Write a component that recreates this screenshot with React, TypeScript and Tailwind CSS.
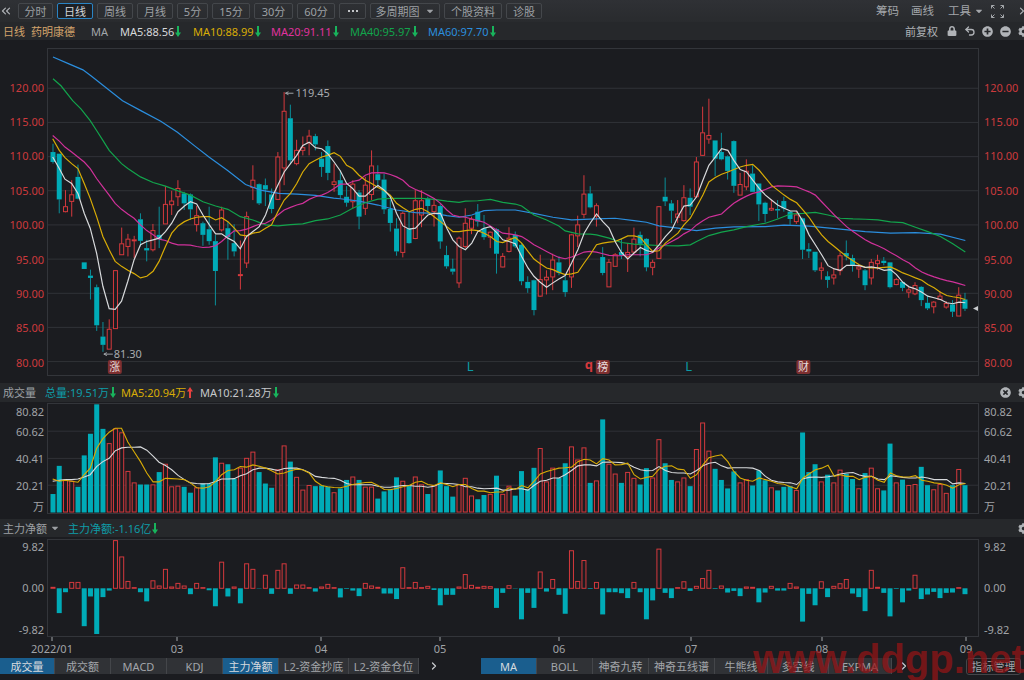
import React from "react";
import { ChevronsLeft, ChevronsRight, ChevronRight, Undo2 } from "lucide-react";
import { FaCaretDown, FaCog, FaLock, FaMinusCircle, FaPlusCircle, FaTimesCircle } from "react-icons/fa";

const UP = "#d6393d";
const DN = "#00abb7";
const BG = "#1b1c20";
const X = (i: number) => 52 + i * 6.26;

// [colour (1 red, 0 teal), high, body top, body bottom, low] measured on a 3x grid
const C: number[][] = [
  [0,130,155,185,190],[0,160,160,298,340],[1,270,320,335,337],[1,240,284,304,350],[0,193,230,296,298],
  [0,488,488,508,508],[0,510,528,535,600],[0,555,563,678,695],[0,668,712,737,758],[1,660,690,750,750],
  [1,513,513,688,688],[1,383,432,465,465],[1,402,418,440,470],[1,408,420,422,475],[0,340,358,423,440],
  [0,420,445,452,485],[1,372,392,450,455],[0,320,405,418,445],[1,258,313,372,372],[1,272,303,314,345],
  [1,240,265,290,318],[0,275,280,310,330],[0,280,283,328,360],[1,318,347,374,395],[0,365,370,405,438],
  [0,320,388,424,435],[0,405,424,514,618],[1,320,330,390,395],[0,365,385,412,480],[0,373,430,455,470],
  [1,422,525,528,570],[1,335,350,490,505],[1,195,240,262,300],[0,250,252,310,315],[0,235,255,268,318],
  [0,265,283,327,340],[1,155,170,298,300],[1,-26,32,203,255],[0,12,53,180,190],[1,118,150,190,195],
  [1,108,142,150,165],[1,88,107,127,165],[0,100,107,132,150],[0,155,175,200,230],[0,120,137,218,240],
  [1,190,245,253,275],[0,210,240,285,295],[0,258,290,308,320],[1,240,252,305,325],[0,270,277,350,388],
  [1,230,255,325,345],[1,150,197,283,300],[0,195,222,240,255],[0,220,238,328,342],[0,300,327,369,395],
  [0,355,386,455,468],[1,335,340,458,473],[0,335,385,430,432],[1,270,302,416,418],[1,270,302,345,382],
  [0,290,296,318,340],[1,295,316,335,380],[0,310,318,425,447],[0,438,466,500,507],[0,477,507,516,525],
  [1,410,415,550,565],[1,325,370,440,445],[1,350,358,385,403],[0,312,335,365,380],[0,345,385,412,420],
  [1,395,397,412,445],[0,385,388,462,522],[1,460,470,502,503],[1,382,415,455,458],[0,395,405,440,445],
  [0,430,435,545,557],[0,530,547,566,580],[0,540,542,632,648],[1,465,540,590,592],[1,512,533,541,585],
  [1,462,481,532,572],[0,470,488,520,527],[0,530,542,578,592],[1,402,405,532,565],[1,347,375,408,442],
  [1,225,282,343,355],[0,258,280,322,325],[1,310,317,348,380],[0,442,472,520,527],[1,478,488,562,562],
  [1,460,465,500,500],[0,415,457,467,478],[1,430,458,470,517],[1,383,418,457,462],[0,395,405,432,470],
  [0,415,417,503,515],[1,480,488,503,527],[1,318,320,476,476],[0,232,290,304,318],[0,300,310,332,370],
  [1,300,342,352,370],[1,255,293,362,365],[0,265,293,320,345],[1,170,185,290,292],[1,18,97,165,167],
  [1,-6,105,116,130],[0,120,120,175,228],[0,97,155,177,180],[0,165,168,212,238],[0,120,122,257,278],
  [1,218,253,285,285],[1,177,213,260,270],[0,195,220,275,275],[0,250,250,313,363],[0,305,308,342,368],
  [1,298,325,330,333],[0,300,327,331,355],[0,290,303,325,335],[0,333,335,357,375],[1,333,345,365,372],
  [0,353,355,450,478],[0,430,448,455,475],[0,456,456,512,517],[1,488,505,512,540],[0,515,530,541,565],
  [1,505,526,535,555],[1,458,468,513,527],[0,422,460,470,482],[0,465,475,497,516],[1,495,502,508,535],
  [0,508,512,557,572],[1,478,488,535,555],[1,465,483,492,510],[0,472,483,490,497],[0,488,488,563,567],
  [1,535,540,555,557],[0,545,547,565,575],[1,563,571,578,595],[1,548,558,583,587],[0,560,562,602,620],
  [0,588,610,627,632],[1,605,608,622,642],[1,575,590,600,602],[1,605,612,623,628],[0,602,615,637,653],
  [1,563,587,650,650],[0,580,600,628,635],
];

// top of each volume bar on the same 3x grid, signed: + red hollow, - teal solid
const V: number[] = [
  -344,-258,303,305,-322,-226,-160,-70,-145,190,145,157,275,310,-315,-315,316,-277,253,322,320,-322,-340,325,-312,
  -312,-232,250,-253,-298,265,235,216,-277,-312,-325,270,197,-245,293,332,318,-320,-318,-322,340,-327,-301,292,-301,
  323,323,-358,-336,-330,-293,305,-318,292,316,-344,318,-272,-320,-352,316,296,350,-360,-347,345,-288,345,320,-349,
  -274,-330,-264,205,307,265,-295,-250,200,240,203,-310,304,-116,253,283,-310,278,296,-315,-265,295,178,-250,-301,
  307,295,-320,208,127,213,-267,-301,-327,-275,310,300,-318,-272,-302,325,-333,-322,-320,333,-156,-277,-253,307,-285,
  310,271,-282,-298,328,-280,265,328,-333,-190,310,-300,318,315,-261,-317,331,315,342,-317,269,-317,
];

// net-flow bars, colour from the sign; same 3x grid
const N: number[] = [
  3,-76,-12,18,18,-116,-25,-140,-27,-7,146,96,21,2,-12,-40,23,7,58,4,15,7,-18,15,2,-6,-55,80,-25,4,-46,75,58,-1,40,
  -17,55,75,-17,10,10,2,-10,4,12,2,-28,-2,-7,-24,15,7,3,-16,-16,-33,63,2,18,2,6,-5,-52,-20,-20,4,42,9,3,6,5,-60,-14,
  8,-1,-95,-14,-60,50,-10,27,-20,-78,115,21,85,-2,18,-80,-12,-12,-15,-30,18,-12,-95,-37,120,-14,-30,2,20,-8,6,30,55,
  -2,7,-13,-8,-24,4,3,-43,-13,6,-7,-7,15,4,-102,-17,-52,20,-27,6,14,27,-16,-27,-70,55,3,-14,-86,-2,-43,-7,40,-33,-19,
  -11,-30,-14,-13,2,-18,
];

const seg = (ox: number, oy: number, a: number[]) => {
  const out: string[] = [];
  for (let i = 0; i < a.length; i += 2) out.push(`${(ox + a[i] / 3).toFixed(1)},${(oy + a[i + 1] / 3).toFixed(1)}`);
  return out.join(" ");
};
const line = (oy: number, a: number[], b: number[], c: number[]) => `${seg(0, oy, a)} ${seg(340, oy, b)} ${seg(680, oy, c)}`;

const MA5 = line(100,
  [155,170,175,205,192,237,212,250,231,280,250,340,268,385,287,460,306,560,325,628,343,630,362,605,381,545,400,480,419,435,438,425,457,420,475,415,494,395,513,370,532,335,551,318,569,305,588,312,607,345,626,375,645,402,663,402,682,415,701,425,719,447,738,410,757,395,776,380,795,345,813,295,832,255,851,215,870,190,889,165,907,135,926,125,945,142,964,145,982,160,1001,185,1020,212],
  [19,250,37,265,56,288,75,288,94,270,113,256,132,270,150,290,169,340,188,378,207,388,226,385,244,365,263,345,282,340,301,340,320,385,338,420,357,440,376,450,395,430,413,395,432,385,451,380,470,398,488,420,507,425,526,432,545,470,564,505,582,530,601,548,620,563,639,550,657,538,676,528,695,490,714,450,733,400,751,370,770,342,789,365,808,385,826,425,845,458,864,478,883,460,902,443,920,452,939,457,958,435,977,410,996,390,1015,350],
  [13,318,32,315,51,290,70,240,88,195,107,170,126,145,145,150,163,180,182,208,201,215,220,240,239,265,258,285,276,300,295,315,314,325,333,333,352,333,371,365,389,405,408,435,427,465,446,498,465,508,483,512,502,497,521,497,540,498,558,503,577,502,596,505,615,512,634,510,652,525,671,548,690,562,709,568,728,578,746,590,765,595,784,600,803,610,821,613,840,608,859,610]);
const MA10 = line(100,
  [155,115,175,150,192,172,212,190,231,205,250,250,268,295,287,350,306,410,325,450,343,485,362,500,381,512,400,522,419,535,438,530,457,515,475,485,494,440,513,400,532,378,551,365,569,357,588,352,607,350,626,350,645,360,663,353,682,365,701,385,719,405,738,408,757,400,776,397,795,385,813,375,832,335,851,300,870,280,889,250,907,215,926,190,945,180,964,170,982,165,1001,157,1020,168],
  [19,195,37,205,56,225,75,240,94,250,113,262,132,272,150,285,169,310,188,323,207,335,226,328,244,325,263,335,282,350,301,365,320,380,338,395,357,395,376,392,395,390,413,392,432,400,451,410,470,425,488,428,507,420,526,413,545,430,564,455,582,478,601,492,620,505,639,510,657,518,676,525,695,523,714,518,733,490,751,465,770,435,789,430,808,427,826,425,845,417,864,408,883,408,902,413,920,435,939,455,958,453,977,430,996,415,1015,400],
  [13,375,32,355,51,320,70,285,88,245,107,232,126,222,145,215,163,208,182,200,201,195,220,192,239,210,258,233,276,255,295,270,314,285,333,298,352,308,371,330,389,352,408,380,427,405,446,425,465,440,483,455,502,470,521,483,540,495,558,503,577,505,596,505,615,503,634,502,652,510,671,520,690,527,709,535,728,542,746,555,765,565,784,578,803,588,821,592,840,595,859,600]);
const MA20 = line(100,
  [155,105,175,122,192,140,212,155,231,170,250,185,268,205,287,235,306,260,325,285,343,310,362,328,381,342,400,355,419,375,438,392,457,405,475,418,494,422,513,430,532,435,551,435,569,436,588,440,607,443,626,442,645,438,663,425,682,408,701,393,719,392,738,388,757,380,776,373,795,370,813,360,832,345,851,330,870,322,889,315,907,310,926,298,945,290,964,285,982,277,1001,265,1020,252],
  [19,252,37,244,56,240,75,225,94,218,113,217,132,218,150,223,169,230,188,240,207,258,226,268,244,275,263,285,282,295,301,310,320,330,338,345,357,350,376,352,395,357,413,362,432,367,451,378,470,390,488,400,507,402,526,405,545,410,564,422,582,435,601,445,620,455,639,465,657,473,676,477,695,472,714,465,733,457,751,455,770,457,789,462,808,467,826,468,845,468,864,465,883,465,902,465,920,465,939,458,958,445,977,435,996,425,1015,415],
  [13,402,32,392,51,375,70,362,88,352,107,347,126,342,145,325,163,310,182,298,201,288,220,280,239,275,258,268,276,260,295,257,314,258,333,259,352,260,371,268,389,275,408,285,427,305,446,325,465,345,483,362,502,380,521,395,540,408,558,420,577,430,596,438,615,447,634,458,652,468,671,480,690,490,709,505,728,517,746,525,765,532,784,538,803,543,821,547,840,552,859,558]);
const MA40 = "52,78 60,85 " + line(100,
  [215,0,240,25,268,60,287,90,306,120,325,150,362,190,381,205,419,230,457,247,494,258,532,272,569,285,607,305,645,318,682,328,719,350,757,360,795,375,832,378,870,374,907,372,945,362,982,357,1020,345],
  [37,325,75,308,113,297,150,295,207,295,244,295,282,298,320,303,357,307,376,303,413,302,451,298,488,307,526,312,545,318,582,345,620,360,657,378,676,393,714,402,751,403,770,405,808,415,845,428,883,433,920,435,958,437,1015,438],
  [32,435,51,425,88,407,126,397,163,390,201,380,239,373,258,370,295,357,333,342,371,340,408,337,446,345,483,355,521,357,558,358,596,360,634,366,671,368,709,382,746,395,784,410,821,432,859,457]);
const MA60 = "52,56 68,63 82,69 90,75 " + line(100,
  [365,0,420,30,480,62,530,95,580,135,625,170,680,210,735,253,780,270,835,280,890,282,945,286,1000,294,1020,296],
  [56,303,113,315,169,330,226,338,282,340,320,347,357,352,395,345,432,332,470,330,526,330,582,340,639,352,695,360,770,357,826,355,883,362,920,367,958,378,1015,385],
  [51,392,107,385,163,381,258,380,314,376,389,379,483,388,558,395,634,400,709,398,784,403,859,422]);

const VOLY = line(380,
  [155,298,175,305,192,302,212,305,231,308,250,285,268,265,287,205,306,175,325,155,343,143,362,143,381,185,400,215,419,245,438,280,457,307,475,307,494,296,513,297,532,298,551,300,569,310,588,325,607,326,626,322,645,305,663,285,682,272,701,270,719,260,738,262,757,255,776,259,795,265,813,273,832,283,851,280,870,273,889,268,907,270,926,280,945,305,964,318,982,322,1001,324,1020,325],
  [19,320,37,315,56,312,75,309,94,308,113,318,132,330,150,331,169,327,188,322,207,318,226,308,244,305,263,315,282,318,301,310,320,315,338,322,357,315,376,315,395,327,413,335,432,335,451,340,470,338,488,338,507,325,526,330,545,318,564,325,582,305,601,283,620,275,639,270,657,265,676,264,695,262,714,245,733,238,751,240,770,252,789,236,808,240,826,255,845,254,864,250,883,285,902,298,920,293,939,290,958,268,977,259,996,258,1015,268],
  [13,270,32,296,51,285,70,255,88,233,107,228,126,224,145,245,163,275,182,295,201,302,220,305,239,295,258,300,276,305,295,312,314,314,333,322,352,328,371,295,389,283,408,270,427,265,446,256,465,290,483,285,502,290,521,290,540,300,558,293,577,290,596,302,615,308,634,280,652,288,671,292,690,292,709,288,728,302,746,305,765,310,784,312,803,317,821,326,840,316,859,312]);
const VOLW = line(380,
  [155,305,175,302,192,300,212,300,231,298,250,292,268,285,287,260,306,245,325,235,343,212,362,203,381,201,400,201,419,200,438,210,457,228,475,247,494,257,513,270,532,287,551,300,569,310,588,312,607,313,626,312,645,306,663,298,682,298,701,297,719,288,738,282,757,270,776,265,795,265,813,268,832,272,851,266,870,265,889,265,907,270,926,278,945,290,964,293,982,295,1001,296,1020,302],
  [19,312,37,316,56,316,75,316,94,316,113,320,132,323,150,323,169,320,188,318,207,318,226,320,244,320,263,323,282,320,301,311,320,312,338,313,357,315,376,322,395,322,413,326,432,328,451,327,470,326,488,332,507,332,526,328,545,328,564,332,582,318,601,305,620,302,639,295,657,295,676,285,695,272,714,258,733,255,751,255,770,258,789,247,808,246,826,247,845,248,864,252,883,262,902,270,920,273,939,272,958,260,977,272,996,278,1015,280],
  [13,280,32,283,51,272,70,258,88,250,107,247,126,258,145,265,163,264,182,264,201,264,220,265,239,272,258,290,276,302,295,307,314,309,333,310,352,315,371,297,389,293,408,292,427,293,446,291,465,288,483,283,502,280,521,278,540,286,558,290,577,290,596,298,615,300,634,288,652,290,671,293,690,295,709,295,728,292,746,295,765,300,784,300,803,300,821,313,840,310,859,312]);

const Arrow = ({ up }: { up?: boolean }) => (
  <svg width="6" height="11" viewBox="0 0 6 11" className="ml-[1px] shrink-0">
    <path d={up ? "M3 0L6 4.5H4V11H2V4.5H0Z" : "M2 0H4V6.5H6L3 11L0 6.5H2Z"} fill={up ? "#e8413f" : "#18b45c"} />
  </svg>
);

const Btn = ({ w, active, children }: { w: string; active?: boolean; children: React.ReactNode }) => (
  <div className={`${w} h-[16px] flex items-center justify-center rounded-[2px] border ${active ? "border-[#2a84c4] text-[#d2d5d8] bg-[#1c1f24]" : "border-[#44474b] text-[#9da0a4]"}`}>{children}</div>
);

const Legend = ({ w, color, text, up }: { w: string; color: string; text: string; up?: boolean }) => (
  <span className={`${w} ${color} flex items-center whitespace-nowrap`}>
    {text}
    <Arrow up={up} />
  </span>
);

const Tab = ({ w, active, children }: { w: string; active?: boolean; children: React.ReactNode }) => (
  <div className={`${w} h-[16px] flex items-center justify-center whitespace-nowrap border-r border-[#44464a] ${active ? "bg-[#1a5e8e] text-[#d6dade]" : "bg-[#303236] text-[#a3a6aa]"}`}>{children}</div>
);

const Candles = () => (
  <>
    {C.map(([r, h, t, b, l], i) => {
      const x = X(i);
      const col = r ? UP : DN;
      const wick = r ? UP : "#0a8f9a";
      const yh = 100 + h / 3, yt = 100 + t / 3, yb = 100 + b / 3, yl = 100 + l / 3;
      return (
        <g key={i}>
          <line x1={x} x2={x} y1={yh} y2={yt} stroke={wick} />
          <line x1={x} x2={x} y1={yb} y2={yl} stroke={wick} />
          {r ? (
            <rect x={x - 2} y={yt} width={4} height={Math.max(yb - yt, 1)} fill={BG} stroke={col} />
          ) : (
            <rect x={x - 2.5} y={yt} width={5} height={Math.max(yb - yt, 1.5)} fill={col} />
          )}
        </g>
      );
    })}
  </>
);

const Badge = ({ x, label }: { x: number; label: string }) => (
  <g>
    <rect x={x} y={361} width={14} height={14} rx={2} fill="#7d2f30" />
    <text x={x + 7} y={372} textAnchor="middle" fontSize="11" fill="#e8dcdc">{label}</text>
  </g>
);

const Plot = ({ box, className, children }: { box: string; className: string; children: React.ReactNode }) => (
  <svg viewBox={box} className={`${className} block shrink-0 border border-[#33353a]`} preserveAspectRatio="none">
    {children}
  </svg>
);

const Grid = ({ ys }: { ys: number[] }) => (
  <>
    {ys.map((y) => (
      <line key={y} x1={47} x2={979} y1={y} y2={y} stroke="#303237" />
    ))}
  </>
);

const PRICES = ["120.00", "115.00", "110.00", "105.00", "100.00", "95.00", "90.00", "85.00", "80.00"];

const PriceAxis = ({ left }: { left?: boolean }) => (
  <div className={`flex flex-col pt-[22px] text-[#cc3a3d] ${left ? "w-[47px] items-end pr-[3px]" : "w-[45px] items-start pl-[5px]"}`}>
    {PRICES.map((p) => (
      <div key={p} className="h-[34.4px] flex items-center">{p}</div>
    ))}
  </div>
);

const VolAxis = ({ left }: { left?: boolean }) => (
  <div className={`flex flex-col text-[#a0a3a7] ${left ? "w-[47px] items-end pr-[3px]" : "w-[45px] items-start pl-[5px]"}`}>
    <div className="h-[16px] flex items-center">80.82</div>
    <div className="h-[16px] mt-[4px] flex items-center">60.62</div>
    <div className="h-[16px] mt-[11px] flex items-center">40.41</div>
    <div className="h-[16px] mt-[11px] flex items-center">20.21</div>
    <div className="h-[16px] mt-[5px] flex items-center">万</div>
  </div>
);

const NetAxis = ({ left }: { left?: boolean }) => (
  <div className={`flex flex-col text-[#a0a3a7] ${left ? "w-[47px] items-end pr-[3px]" : "w-[45px] items-start pl-[5px]"}`}>
    <div className="h-[16px] flex items-center">9.82</div>
    <div className="h-[16px] mt-[25px] flex items-center">0.00</div>
    <div className="h-[16px] mt-[26px] flex items-center">-9.82</div>
  </div>
);

const TICKS: [number, string][] = [[52, "2022/01"], [177, "03"], [321, "04"], [440, "05"], [559, "06"], [691, "07"], [822, "08"], [966, "09"]];

const ExpandIcon = () => (
  <svg width="13" height="13" viewBox="0 0 13 13" stroke="#a3a6aa" fill="none" strokeWidth="1">
    <path d="M0.5 3.5V0.5H3.5M0.5 0.5L3.5 3.5M9.5 0.5H12.5V3.5M12.5 0.5L9.5 3.5M0.5 9.5V12.5H3.5M0.5 12.5L3.5 9.5M9.5 12.5H12.5V9.5M12.5 12.5L9.5 9.5" />
  </svg>
);

export default function App() {
  return (
    <div className="relative w-[1024px] h-[680px] overflow-hidden bg-[#1b1c20] text-[11px] leading-none font-['Noto_Sans','Noto_Sans_CJK_SC',sans-serif]">
      {/* toolbar */}
      <div className="h-[22px] flex items-center bg-gradient-to-b from-[#2f3135] to-[#292b2e] text-[#a3a6aa]">
        <div className="w-[18px] text-[#b0b3b7]"><ChevronsLeft size={14} strokeWidth={2} className="-ml-[1px]" /></div>
        <div className="flex items-center gap-[4px]">
          <Btn w="w-[35px]">分时</Btn>
          <Btn w="w-[36px]" active>日线</Btn>
          <Btn w="w-[36px]">周线</Btn>
          <Btn w="w-[36px]">月线</Btn>
          <Btn w="w-[31px]">5分</Btn>
          <Btn w="w-[38px]">15分</Btn>
          <Btn w="w-[39px]">30分</Btn>
          <Btn w="w-[38px]">60分</Btn>
          <Btn w="w-[27px]"><span className="flex gap-[2px]"><i className="w-[2px] h-[2px] bg-[#c2c4c7]" /><i className="w-[2px] h-[2px] bg-[#c2c4c7]" /><i className="w-[2px] h-[2px] bg-[#c2c4c7]" /></span></Btn>
          <Btn w="w-[70px]">多周期图<FaCaretDown size={10} className="ml-[5px]" /></Btn>
          <Btn w="w-[58px]">个股资料</Btn>
          <Btn w="w-[36px]">诊股</Btn>
        </div>
        <div className="ml-auto flex items-center text-[11.5px]">
          <span className="mr-[12px]">筹码</span>
          <span className="mr-[14px]">画线</span>
          <span className="flex items-center">工具<FaCaretDown size={10} className="ml-[3px]" /></span>
          <span className="ml-[7px] mr-[13px]"><ExpandIcon /></span>
          <ChevronsRight size={14} strokeWidth={2} className="-mr-[7px] text-[#b0b3b7]" />
        </div>
      </div>

      {/* legend */}
      <div className="h-[18px] flex items-center pl-[3px] bg-[#26282b] text-[#a3a6aa]">
        <span className="w-[28px] text-[#d2a36c]">日线</span>
        <span className="w-[60px] text-[#d2a36c]">药明康德</span>
        <span className="w-[29px]">MA</span>
        <Legend w="w-[73px]" color="text-[#d6d8db]" text="MA5:88.56" />
        <Legend w="w-[78px]" color="text-[#d9ac06]" text="MA10:88.99" />
        <Legend w="w-[79px]" color="text-[#e0329f]" text="MA20:91.11" />
        <Legend w="w-[78px]" color="text-[#12a44c]" text="MA40:95.97" />
        <Legend w="w-[78px]" color="text-[#2b8ede]" text="MA60:97.70" />
        <div className="ml-auto flex items-center text-[#b0b3b7]">
          <span className="mr-[9px]">前复权</span>
          <FaLock size={10} className="mr-[7px]" />
          <Undo2 size={12} strokeWidth={2.6} className="mr-[6px]" />
          <FaPlusCircle size={11} className="mr-[7px]" />
          <FaMinusCircle size={11} className="mr-[7px]" />
          <FaCog size={11} className="-mr-[5px]" />
        </div>
      </div>

      {/* price panel */}
      <div className="h-[343px] flex pt-[8px]">
        <PriceAxis left />
        <Plot box="47 48 932 328" className="w-[932px] h-[328px]">
          <Grid ys={[87.5, 121.9, 156.3, 190.6, 225, 259.4, 293.8, 328.1, 362.5]} />
          <Candles />
          <polyline points={MA60} fill="none" stroke="#2b8ede" strokeWidth="1.2" />
          <polyline points={MA40} fill="none" stroke="#12a44c" strokeWidth="1.2" />
          <polyline points={MA20} fill="none" stroke="#d0319a" strokeWidth="1.2" />
          <polyline points={MA10} fill="none" stroke="#d9ac06" strokeWidth="1.2" />
          <polyline points={MA5} fill="none" stroke="#d8dadc" strokeWidth="1.2" />
          <path d="M285 92.5H293M285 92.5L288 91M285 92.5L288 94" stroke="#a0a3a7" fill="none" />
          <text x={295} y={96} fontSize="11" fill="#a8abaf">119.45</text>
          <path d="M103 355H112M103 355L106 353.5M103 355L106 356.5" stroke="#a0a3a7" fill="none" />
          <text x={113} y={359} fontSize="11" fill="#a8abaf">81.30</text>
          <Badge x={107} label="涨" />
          <text x={470} y={372} textAnchor="middle" fontSize="13" fill="#0b9aa5">L</text>
          <text x={589} y={370} textAnchor="middle" fontSize="13" fontWeight="bold" fill={UP}>q</text>
          <Badge x={596} label="榜" />
          <text x={689} y={372} textAnchor="middle" fontSize="13" fill="#0b9aa5">L</text>
          <Badge x={797} label="财" />
          <path d="M974 309L979 306.5V311.5Z" fill="#c8cacd" />
        </Plot>
        <PriceAxis />
      </div>

      {/* volume header */}
      <div className="h-[19px] flex items-center pl-[3px] bg-[#26282b] text-[#9da0a4]">
        <span className="w-[42px]">成交量</span>
        <Legend w="w-[76px]" color="text-[#0e9da8]" text="总量:19.51万" />
        <Legend w="w-[79px]" color="text-[#d9ac06]" text="MA5:20.94万" up />
        <Legend w="w-[85px]" color="text-[#c6c8cb]" text="MA10:21.28万" />
        <div className="ml-auto flex items-center text-[#b0b3b7]">
          <FaTimesCircle size={11} className="mr-[7px]" />
          <FaCog size={11} className="-mr-[5px]" />
        </div>
      </div>

      {/* volume panel */}
      <div className="h-[117px] flex pt-[1px]">
        <VolAxis left />
        <Plot box="47 403 932 111" className="w-[932px] h-[111px]">
          <Grid ys={[430.7, 458.4, 485.7]} />
          {V.map((v, i) => {
            const x = X(i);
            const y = Math.max(380 + Math.abs(v) / 3, 403);
            return v > 0 ? (
              <rect key={i} x={x - 2} y={y} width={4} height={513 - y} fill={BG} stroke={UP} />
            ) : (
              <rect key={i} x={x - 2.5} y={y} width={5} height={513.5 - y} fill={DN} />
            );
          })}
          <polyline points={VOLW} fill="none" stroke="#d8dadc" strokeWidth="1.1" />
          <polyline points={VOLY} fill="none" stroke="#d9ac06" strokeWidth="1.1" />
        </Plot>
        <VolAxis />
      </div>

      {/* net-flow header */}
      <div className="h-[18px] flex items-center pl-[3px] bg-[#26282b] text-[#9da0a4]">
        <span className="w-[47px]">主力净额</span>
        <FaCaretDown size={10} className="w-[18px] pr-[8px]" />
        <Legend w="w-[100px]" color="text-[#0e9da8]" text="主力净额:-1.16亿" />
        <div className="ml-auto text-[#b0b3b7]"><FaCog size={11} className="-mr-[5px]" /></div>
      </div>

      {/* net-flow panel */}
      <div className="h-[121px] flex flex-col pt-[2px]">
        <div className="flex h-[98px]">
          <NetAxis left />
          <Plot box="47 539 932 98" className="w-[932px] h-[98px]">
            {N.map((v, i) => {
              const x = X(i);
              const h = Math.abs(v) / 3;
              return v > 0 ? (
                <rect key={i} x={x - 2} y={588.3 - h} width={4} height={h} fill={BG} stroke={UP} />
              ) : (
                <rect key={i} x={x - 2.5} y={588.3} width={5} height={h} fill={DN} />
              );
            })}
          </Plot>
          <NetAxis />
        </div>
        <svg viewBox="0 637 1024 21" className="block w-[1024px] h-[21px]">
          {TICKS.map(([x, t]) => (
            <g key={t}>
              <line x1={x} x2={x} y1={637} y2={641} stroke="#a0a3a7" />
              <text x={x} y={653} textAnchor="middle" fontSize="11" fill="#a0a3a7">{t}</text>
            </g>
          ))}
        </svg>
      </div>

      {/* indicator tabs */}
      <div className="h-[22px] flex items-start bg-[#1b1c20]">
        <Tab w="w-[55px]" active>成交量</Tab>
        <Tab w="w-[56px]">成交额</Tab>
        <Tab w="w-[56px]">MACD</Tab>
        <Tab w="w-[56px]">KDJ</Tab>
        <Tab w="w-[56px]" active>主力净额</Tab>
        <Tab w="w-[70px]">L2-资金抄底</Tab>
        <Tab w="w-[70px]">L2-资金仓位</Tab>
        <div className="w-[62px] h-[16px] flex items-center pl-[9px] text-[#c8cacd]"><ChevronRight size={12} strokeWidth={2.5} /></div>
        <Tab w="w-[56px]" active>MA</Tab>
        <Tab w="w-[56px]">BOLL</Tab>
        <Tab w="w-[56px]">神奇九转</Tab>
        <Tab w="w-[66px]">神奇五线谱</Tab>
        <Tab w="w-[53px]">牛熊线</Tab>
        <Tab w="w-[61px]">多空线</Tab>
        <Tab w="w-[63px]">EXPMA</Tab>
        <div className="w-[74px] h-[16px] flex items-center pl-[6px] text-[#c8cacd]"><ChevronRight size={12} strokeWidth={2.5} /></div>
        <div className="w-[55px] h-[17px] flex items-center justify-center rounded-[3px] border border-[#44464a] text-[#a3a6aa]">指标管理</div>
      </div>

      {/* site watermark laid over the tabs */}
      <div className="absolute left-[753px] top-[636px] text-[40px] leading-[46px] font-bold whitespace-nowrap text-[rgba(150,20,22,0.72)] font-['Liberation_Sans',sans-serif]">www.ddgp.net</div>
    </div>
  );
}
